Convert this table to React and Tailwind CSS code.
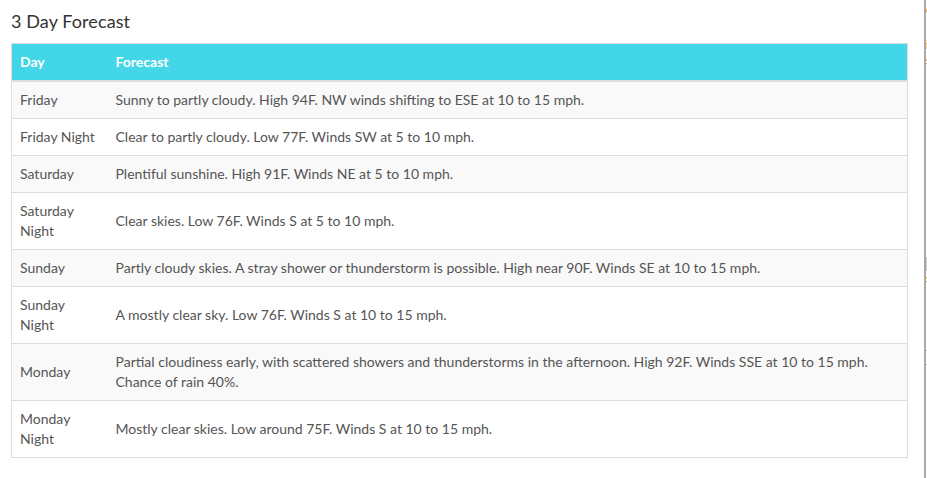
import React from "react";

const rows = [
  ["Friday", "Sunny to partly cloudy. High 94F. NW winds shifting to ESE at 10 to 15 mph."],
  ["Friday Night", "Clear to partly cloudy. Low 77F. Winds SW at 5 to 10 mph."],
  ["Saturday", "Plentiful sunshine. High 91F. Winds NE at 5 to 10 mph."],
  ["Saturday Night", "Clear skies. Low 76F. Winds S at 5 to 10 mph."],
  ["Sunday", "Partly cloudy skies. A stray shower or thunderstorm is possible. High near 90F. Winds SE at 10 to 15 mph."],
  ["Sunday Night", "A mostly clear sky. Low 76F. Winds S at 10 to 15 mph."],
  ["Monday", "Partial cloudiness early, with scattered showers and thunderstorms in the afternoon. High 92F. Winds SSE at 10 to 15 mph. Chance of rain 40%."],
  ["Monday Night", "Mostly clear skies. Low around 75F. Winds S at 10 to 15 mph."],
];

export default function App() {
  return (
    <div className="flex h-[478px] w-[927px] overflow-hidden bg-white font-['Lato','Open_Sans',sans-serif]">
      <div className="w-[924px] shrink-0 pl-[11px] pt-[11px]">
        <h3 className="text-[18px] tracking-[0.1px] leading-[20px] text-[#333] mb-[12px]">3 Day Forecast</h3>
        <table className="w-[897px] border-collapse border border-[#ddd] text-[14px] leading-[20px] text-[#555]">
          <thead>
            <tr className="bg-[#42d6e8] text-white">
              <th className="w-[96px] border-b-2 border-[#ddd] px-2 py-2 text-left font-bold">Day</th>
              <th className="border-b-2 border-[#ddd] px-2 py-2 text-left font-bold">Forecast</th>
            </tr>
          </thead>
          <tbody>
            {rows.map(([day, text], i) => (
              <tr key={day} className={i % 2 === 0 ? "bg-[#f9f9f9]" : "bg-white"}>
                <td className="w-[96px] border-t border-[#ddd] px-2 py-2 align-middle">{day}</td>
                <td className="border-t border-[#ddd] px-2 py-2 align-middle">{text}</td>
              </tr>
            ))}
          </tbody>
        </table>
      </div>
      <div className="flex w-[3px] shrink-0 flex-col border-l-2 border-[#aaa] pt-[2px] text-[13px] leading-[16px] text-[#333] font-['Liberation_Sans',sans-serif]">
        <span className="h-[35px]">c</span>
        <span className="h-[16px]">i</span>
        <span className="h-[204px]">s</span>
        <div className="h-[14px] bg-[#ccc]"></div>
        <span className="h-[79px]">s</span>
        <div className="h-px bg-[#ccc] mb-[13px]"></div>
        <div className="h-px bg-[#ccc]"></div>
      </div>
    </div>
  );
}
